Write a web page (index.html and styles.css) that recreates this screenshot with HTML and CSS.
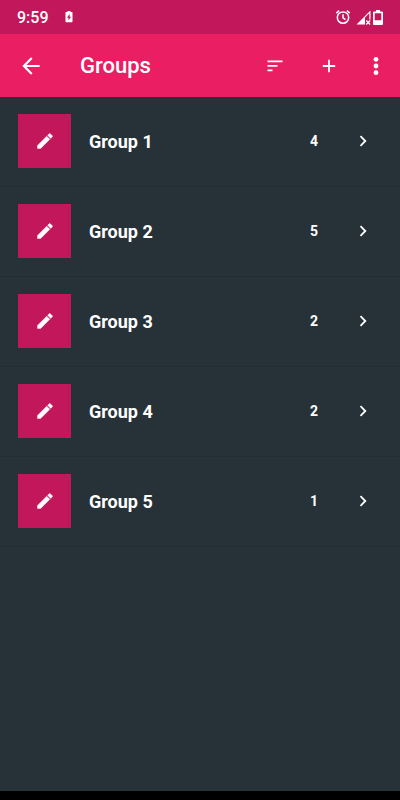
FILE: index.html
```
<!DOCTYPE html>
<html lang="en">
<head>
  <meta charset="UTF-8" />
  <meta name="viewport" content="width=device-width, initial-scale=1.0"/>
  <title>Groups</title>
  <link rel="stylesheet" href="styles.css">
</head>
<body>

  <div class="status-bar">
    <span class="time">9:59</span>
    <svg class="charge-icon" width="8" height="12" viewBox="0 0 8 12">
      <path fill="#fff" fill-rule="evenodd" d="M2.500 0h3v1H7l.5.6v9.200l-.6.5H1.100l-.6-.5V1.600L1 1h1.500zM4.600 2.800L2 6.700h1.500v2.900L6 5.700H4.600z"/>
    </svg>
    <div class="status-icons">
      <svg width="16" height="16" viewBox="0 0 16 16" fill="none" stroke="#fff" stroke-width="1.500">
        <circle cx="8" cy="8.600" r="5.700"/>
        <path d="M8 5.200v3.700l2.500 1.700M1.300 4.100l2.900-2.500M14.700 4.100l-2.900-2.500"/>
      </svg>
      <svg class="signal" width="15" height="15" viewBox="0 0 15 15">
        <path fill="#fff" fill-rule="evenodd" d="M14.500.5V9.500h-1.200V3.200L9 7.500V14.500H.5z"/>
        <path stroke="#fff" stroke-width="1.400" d="M10.300 10.600l3.800 3.800M14.100 10.600l-3.800 3.800"/>
      </svg>
      <svg width="10" height="15" viewBox="0 0 10 15">
        <path fill="#fff" fill-rule="evenodd" d="M3 0h4v1.500h2.200l.8.800v11.900l-.8.800H.8l-.8-.8V2.300l.8-.8H3zM1.700 3.200v7h6.600v-7z"/>
      </svg>
    </div>
  </div>

  <header class="toolbar">
    <button type="button" class="icon-btn" aria-label="Back">
      <svg width="26" height="26" viewBox="0 0 24 24" fill="#fff">
        <path d="M20 11H7.830l5.590-5.590L12 4l-8 8 8 8 1.410-1.410L7.830 13H20v-2z"/>
      </svg>
    </button>
    <h1>Groups</h1>
    <div class="actions">
      <button type="button" class="icon-btn" aria-label="Sort">
        <svg width="16" height="12" viewBox="0 0 16 12" fill="#fff">
          <path d="M.5.500h15v1.800H.5zM.5 5h10v1.800H.5zM.5 9.500h5v1.800H.5z"/>
        </svg>
      </button>
      <button type="button" class="icon-btn" aria-label="Add group">
        <svg width="14" height="14" viewBox="0 0 14 14" stroke="#fff" stroke-width="1.800">
          <path d="M7 .8v12.400M.8 7h12.400"/>
        </svg>
      </button>
      <button type="button" class="icon-btn more" aria-label="More options">
        <svg width="6" height="20" viewBox="0 0 6 20" fill="#fff">
          <circle cx="3" cy="3.300" r="2.400"/>
          <circle cx="3" cy="10" r="2.400"/>
          <circle cx="3" cy="16.700" r="2.400"/>
        </svg>
      </button>
    </div>
  </header>

  <main>
    <ul class="groups" id="groups"></ul>
  </main>

  <div class="nav-bar"></div>

  <script>
    const groups = [
      { name: "Group 1", count: 4 },
      { name: "Group 2", count: 5 },
      { name: "Group 3", count: 2 },
      { name: "Group 4", count: 2 },
      { name: "Group 5", count: 1 }
    ];

    const list = document.getElementById("groups");

    groups.forEach(g => {
      const item = document.createElement("li");
      item.className = "group";
      item.innerHTML = `
        <button type="button" class="edit" aria-label="Edit ${g.name}">
          <svg width="20" height="20" viewBox="0 0 24 24" fill="#fff" stroke="#fff" stroke-width=".5">
            <path d="M3 17.250V21h3.750L17.810 9.940l-3.750-3.750L3 17.250zM20.710 7.040a1 1 0 0 0 0-1.410l-2.340-2.340a1 1 0 0 0-1.410 0l-1.830 1.830 3.750 3.750 1.830-1.830z"/>
          </svg>
        </button>
        <span class="name">${g.name}</span>
        <span class="count">${g.count}</span>
        <button type="button" class="open" aria-label="Open ${g.name}">
          <svg width="8" height="12" viewBox="0 0 8 12" fill="none" stroke="#fff" stroke-width="1.800">
            <path d="M1.500 1.200L6.300 6l-4.800 4.800"/>
          </svg>
        </button>`;
      list.appendChild(item);
    });
  </script>
</body>
</html>
```

FILE: styles.css
```
* {
  box-sizing: border-box;
}
body {
  display: flex;
  flex-direction: column;
  min-height: 100vh;
  margin: 0;
  font-family: Roboto, sans-serif;
  background: #273238;
  color: white;
}
button {
  display: flex;
  align-items: center;
  justify-content: center;
  padding: 0;
  border: none;
  background: none;
  color: inherit;
  cursor: pointer;
}
svg {
  display: block;
}
.status-bar {
  display: flex;
  align-items: center;
  height: 34px;
  padding: 0 17px;
  background: #c2185b;
}
.time {
  font-size: 16px;
  font-weight: 500;
}
.charge-icon {
  margin-left: 16px;
}
.status-icons {
  display: flex;
  align-items: center;
  gap: 2px;
  margin-left: auto;
}
.signal {
  margin-left: 3px;
}
.toolbar {
  display: flex;
  align-items: center;
  height: 63px;
  padding: 0 7px;
  background: #e91e63;
}
.toolbar h1 {
  margin: 0 0 0 25px;
  font-size: 22px;
  font-weight: 500;
}
.icon-btn {
  width: 48px;
  height: 48px;
}
.more {
  width: 34px;
}
.actions {
  display: flex;
  gap: 6px;
  margin-left: auto;
}
main {
  flex: 1;
}
.groups {
  margin: 0;
  padding: 0;
  list-style: none;
}
.group {
  display: flex;
  align-items: center;
  padding: 17px 12px 18px 18px;
  border-bottom: 1px solid #222c31;
}
.edit {
  width: 53px;
  height: 54px;
  background: #c2185b;
}
.name {
  flex: 1;
  margin-left: 18px;
  font-size: 18px;
  font-weight: 700;
}
.count {
  width: 48px;
  font-size: 14px;
  font-weight: 700;
  text-align: center;
}
.open {
  width: 50px;
  height: 48px;
}
.nav-bar {
  height: 9px;
  background: black;
}
```
